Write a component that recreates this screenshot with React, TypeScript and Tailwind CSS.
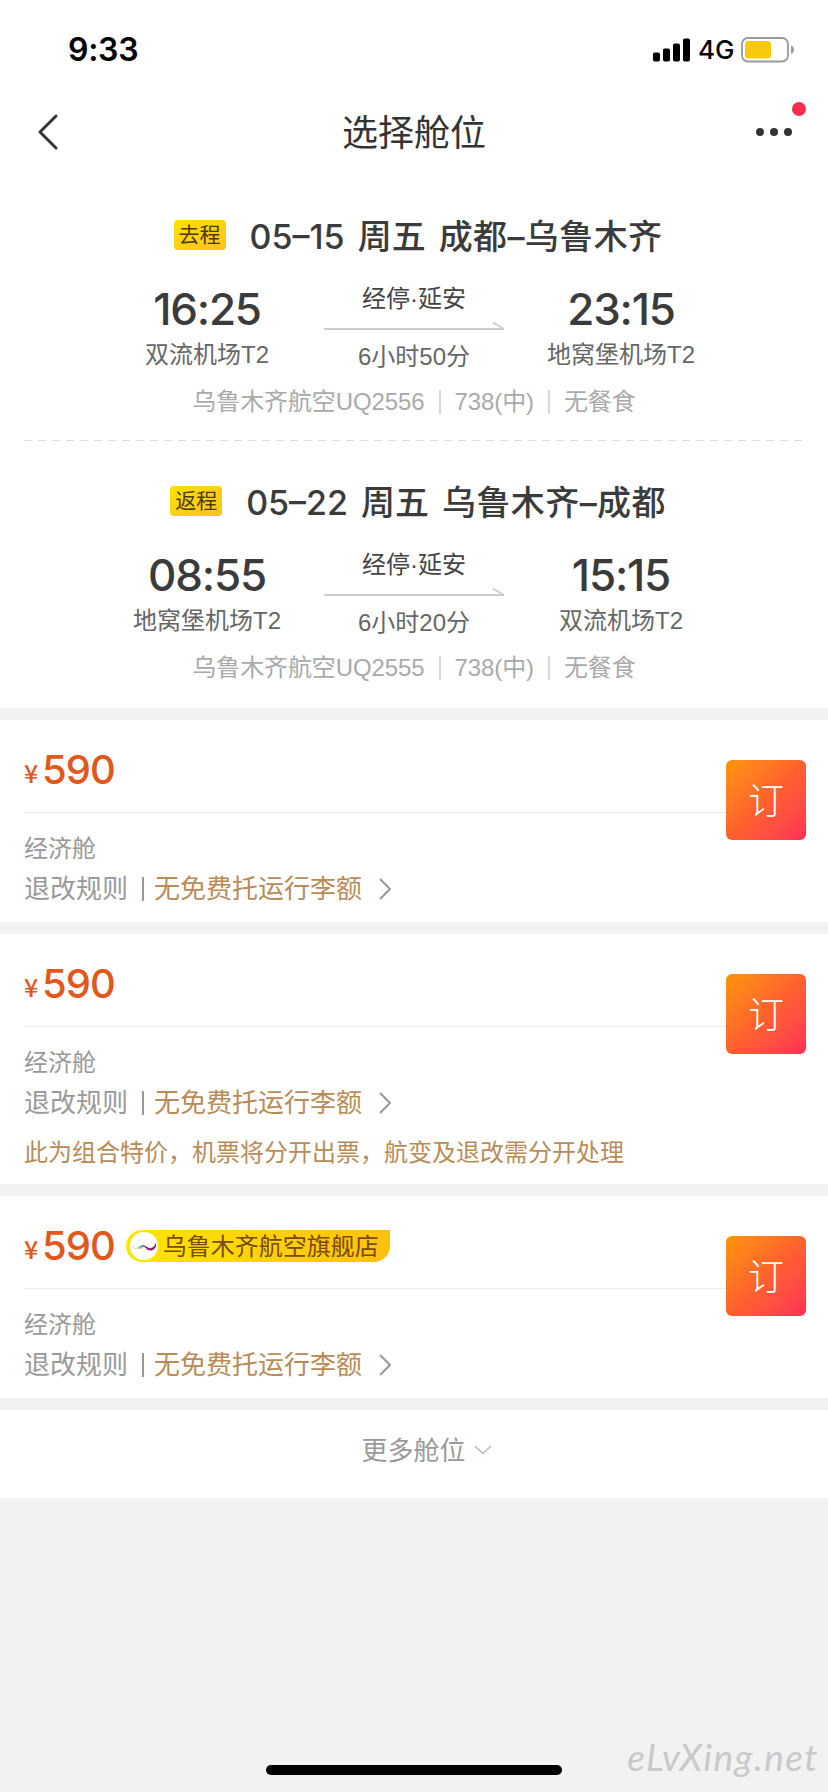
// App.tsx
// Cabin selection page - round trip summary and the list of fares

interface Leg {
  tag: string;
  date: string;
  route: string;
  depart: string;
  departAirport: string;
  arrive: string;
  arriveAirport: string;
  stop: string;
  duration: string;
  details: string[];
}

interface Fare {
  id: number;
  price: number;
  cabin: string;
  note?: string;
  store?: string;
}

const legs: Leg[] = [
  {
    tag: '去程',
    date: '05–15',
    route: '成都–乌鲁木齐',
    depart: '16:25',
    departAirport: '双流机场T2',
    arrive: '23:15',
    arriveAirport: '地窝堡机场T2',
    stop: '经停·延安',
    duration: '6小时50分',
    details: ['乌鲁木齐航空UQ2556', '738(中)', '无餐食'],
  },
  {
    tag: '返程',
    date: '05–22',
    route: '乌鲁木齐–成都',
    depart: '08:55',
    departAirport: '地窝堡机场T2',
    arrive: '15:15',
    arriveAirport: '双流机场T2',
    stop: '经停·延安',
    duration: '6小时20分',
    details: ['乌鲁木齐航空UQ2555', '738(中)', '无餐食'],
  },
];

const fares: Fare[] = [
  { id: 1, price: 590, cabin: '经济舱' },
  {
    id: 2,
    price: 590,
    cabin: '经济舱',
    note: '此为组合特价，机票将分开出票，航变及退改需分开处理',
  },
  { id: 3, price: 590, cabin: '经济舱', store: '乌鲁木齐航空旗舰店' },
];

function StatusBar() {
  return (
    <div className="flex h-[88px] items-start justify-between pr-[33px] pl-[68px] font-['Inter',sans-serif] text-black">
      <span className="mt-[34px] text-[32px] leading-8 font-semibold tracking-[-0.3px]">9:33</span>
      <div className="mt-[34px] flex h-8 items-center">
        <svg width="38" height="24" viewBox="0 0 38 24" className="mr-[7px]">
          <rect x="0" y="14.5" width="7" height="9" rx="1.8" />
          <rect x="10" y="10.5" width="7" height="13" rx="1.8" />
          <rect x="20" y="5.5" width="7" height="18" rx="1.8" />
          <rect x="30" y="0.5" width="7" height="23" rx="1.8" />
        </svg>
        <span className="w-[43px] text-[26px] leading-8 font-medium">4G</span>
        <svg width="54" height="26" viewBox="0 0 54 26" fill="none">
          <rect x="1" y="1" width="46" height="23.5" rx="6" stroke="#999" strokeWidth="1.8" />
          <rect x="4" y="4" width="26" height="17.5" rx="3" fill="#f9c90c" />
          <path d="M50 8.5c2 .8 3 2.400 3 4.300s-1 3.500-3 4.300z" fill="#999" />
        </svg>
      </div>
    </div>
  );
}

function NavBar() {
  return (
    <div className="flex h-[88px] items-center justify-between px-6">
      <button className="w-[46px] pl-[14px]">
        <svg
          width="20"
          height="36"
          viewBox="0 0 20 36"
          fill="none"
          stroke="#333"
          strokeWidth="3"
          strokeLinecap="round"
          strokeLinejoin="round"
        >
          <path d="M18 2 2 18l16 16" />
        </svg>
      </button>
      <h1 className="pt-[3px] text-[36px] leading-10 text-[#333]">选择舱位</h1>
      <button className="relative flex w-[46px] justify-end gap-[6px] pr-3">
        <span className="h-2 w-2 shrink-0 rounded-full bg-[#333]" />
        <span className="h-2 w-2 shrink-0 rounded-full bg-[#333]" />
        <span className="h-2 w-2 shrink-0 rounded-full bg-[#333]" />
        <span className="absolute -top-[26px] -right-[2px] h-[14px] w-[14px] rounded-full bg-[#fb2c4e]" />
      </button>
    </div>
  );
}

function Endpoint({ time, airport }: { time: string; airport: string }) {
  return (
    <div className="flex flex-col items-center pt-[26px]">
      <span className="font-['Inter',sans-serif] text-[44px] leading-[52px] font-medium tracking-[-1.2px] text-[#3b3b3b]">
        {time}
      </span>
      <span className="text-2xl leading-10 text-[#666]">{airport}</span>
    </div>
  );
}

function LegSummary({ leg }: { leg: Leg }) {
  return (
    <section className="h-[264px] pt-[37px]">
      <div className="flex h-11 items-center justify-center pl-2">
        <span className="mr-6 rounded bg-linear-to-br from-[#ffe100] to-[#fdc11c] px-[5px] text-[21px] leading-[30px] text-[#4a3c00]">
          {leg.tag}
        </span>
        <h2 className="flex gap-[13px] pt-[3px] font-['Inter','Noto_Sans_CJK_SC',sans-serif] text-[34px] leading-11 font-medium text-[#3b3b3b]">
          <span>{leg.date}</span>
          <span>周五</span>
          <span className="tracking-[0.4px]">{leg.route}</span>
        </h2>
      </div>

      <div className="mx-auto grid w-[621px] grid-cols-3">
        <Endpoint time={leg.depart} airport={leg.departAirport} />
        <div className="flex flex-col items-center pt-[21px]">
          <span className="text-2xl leading-[42px] text-[#444]">{leg.stop}</span>
          <svg width="180" height="10" viewBox="0 0 180 10" fill="none" stroke="#ccc" strokeWidth="2">
            <path d="M0 9h180" />
            <path d="M169 2.500 179 8.500" />
          </svg>
          <span className="mt-2 text-2xl leading-[38px] text-[#666]">{leg.duration}</span>
        </div>
        <Endpoint time={leg.arrive} airport={leg.arriveAirport} />
      </div>

      <div className="flex h-[52px] items-center justify-center text-2xl tracking-[-0.1px] text-[#aaa]">
        {leg.details.map((item, i) => (
          <div key={item} className="flex items-center">
            {i > 0 && <span className="mx-[14px] h-6 w-[2px] bg-[#d8d8d8]" />}
            <span>{item}</span>
          </div>
        ))}
      </div>
    </section>
  );
}

// Flagship store label shown next to the price
function StoreBadge({ name }: { name: string }) {
  return (
    <div className="ml-[11px] flex h-8 items-center rounded-l-2xl rounded-br-2xl bg-linear-to-r from-[#ffe600] to-[#fdc010] pr-[11px] pl-1">
      <svg width="28" height="28" viewBox="0 0 28 28" fill="none">
        <circle cx="14" cy="14" r="14" fill="#fff" />
        <path d="M2 14c3 2 5 3.500 8 2.200 2-.8 3-2.400 5-2.200l-2 1.600c-4 2.800-8 2-11-1.600z" fill="#c9a34e" />
        <path d="M7 16c2 0 3-3 6-2.600l2 1.200c-3-.4-5 2-8 1.400z" fill="#3f9fb5" />
        <path d="M12 13.500c4-1 5 3.500 9 2.500 3-.8 4-3 5-5.500.8 4-1 7.500-5 8-4.500.5-5-4-9-5z" fill="#8d1c7c" />
      </svg>
      <span className="ml-[5px] pt-px text-2xl leading-8 text-[#7a4b05]">{name}</span>
    </div>
  );
}

function FareCard({ fare }: { fare: Fare }) {
  return (
    <section className="mb-3 bg-white pr-[22px] pl-6">
      <div className="flex h-[120px]">
        <div className="flex h-[93px] flex-1 items-center border-b-[1.5px] border-[#ececec] pt-2">
          <span className="mt-[3px] w-[18px] font-['Noto_Sans_CJK_SC',sans-serif] text-[25px] leading-8 font-medium text-[#e2571a]">
            ¥
          </span>
          <span className="font-['Inter',sans-serif] text-[40px] leading-[48px] font-medium tracking-[-1px] text-[#e2571a]">
            {fare.price}
          </span>
          {fare.store && <StoreBadge name={fare.store} />}
        </div>
        <button className="mt-10 h-20 w-20 rounded-md bg-linear-to-br from-[#ff9500] via-[#ff612c] to-[#ff2d55] pt-[3px] text-[36px] leading-[77px] font-light text-white">
          订
        </button>
      </div>
      <div className="-mt-[11px] text-2xl leading-10 text-[#999]">{fare.cabin}</div>
      <div className="flex h-10 items-center text-[26px] leading-10 text-[#999]">
        <span>退改规则</span>
        <span className="mr-[10px] ml-[14px] h-6 w-[2px] bg-[#999]" />
        <span className="text-[#b98b57]">无免费托运行李额</span>
        <svg width="12" height="22" viewBox="0 0 12 22" fill="none" className="ml-[17px]">
          <path d="M1 1l10 10L1 21" stroke="#999" strokeWidth="2" />
        </svg>
      </div>
      {fare.note && (
        <p className="mt-[11px] h-[37px] text-2xl leading-[38px] text-[#b98b57]">{fare.note}</p>
      )}
      <div className="h-[13px]" />
    </section>
  );
}

export default function App() {
  return (
    <div className="flex h-[1792px] w-[828px] flex-col overflow-hidden bg-[#f2f2f2] font-['Liberation_Sans','Noto_Sans_CJK_SC',sans-serif]">
      <header className="bg-white">
        <StatusBar />
        <NavBar />
      </header>

      {/* Round trip summary */}
      <div className="mb-3 h-[532px] bg-white">
        <LegSummary leg={legs[0]} />
        <div className="mx-6 h-[2px] bg-[repeating-linear-gradient(90deg,#dedede_0_8px,transparent_8px_14px)] bg-[length:100%_1px] bg-no-repeat" />
        <LegSummary leg={legs[1]} />
      </div>

      {/* Fares */}
      {fares.map((fare) => (
        <FareCard key={fare.id} fare={fare} />
      ))}

      <button className="flex h-[88px] items-start justify-center bg-white pt-[21px] pl-[25px] text-[26px] leading-10 text-[#999]">
        更多舱位
        <svg width="18" height="10" viewBox="0 0 18 10" fill="none" className="mt-[14px] ml-2">
          <path d="M1 1l8 7.500L17 1" stroke="#bbb" strokeWidth="1.6" />
        </svg>
      </button>

      {/* Home indicator and site mark */}
      <footer className="relative mt-auto flex h-[60px] items-end justify-center pb-[17px]">
        <div className="h-[10px] w-[296px] rounded-full bg-black" />
        <span className="absolute right-[9px] bottom-[15px] font-['Lato',cursive] text-[37px] leading-10 tracking-[1.500px] text-[#c9c9c9] italic">
          eLvXing.net
        </span>
      </footer>
    </div>
  );
}
